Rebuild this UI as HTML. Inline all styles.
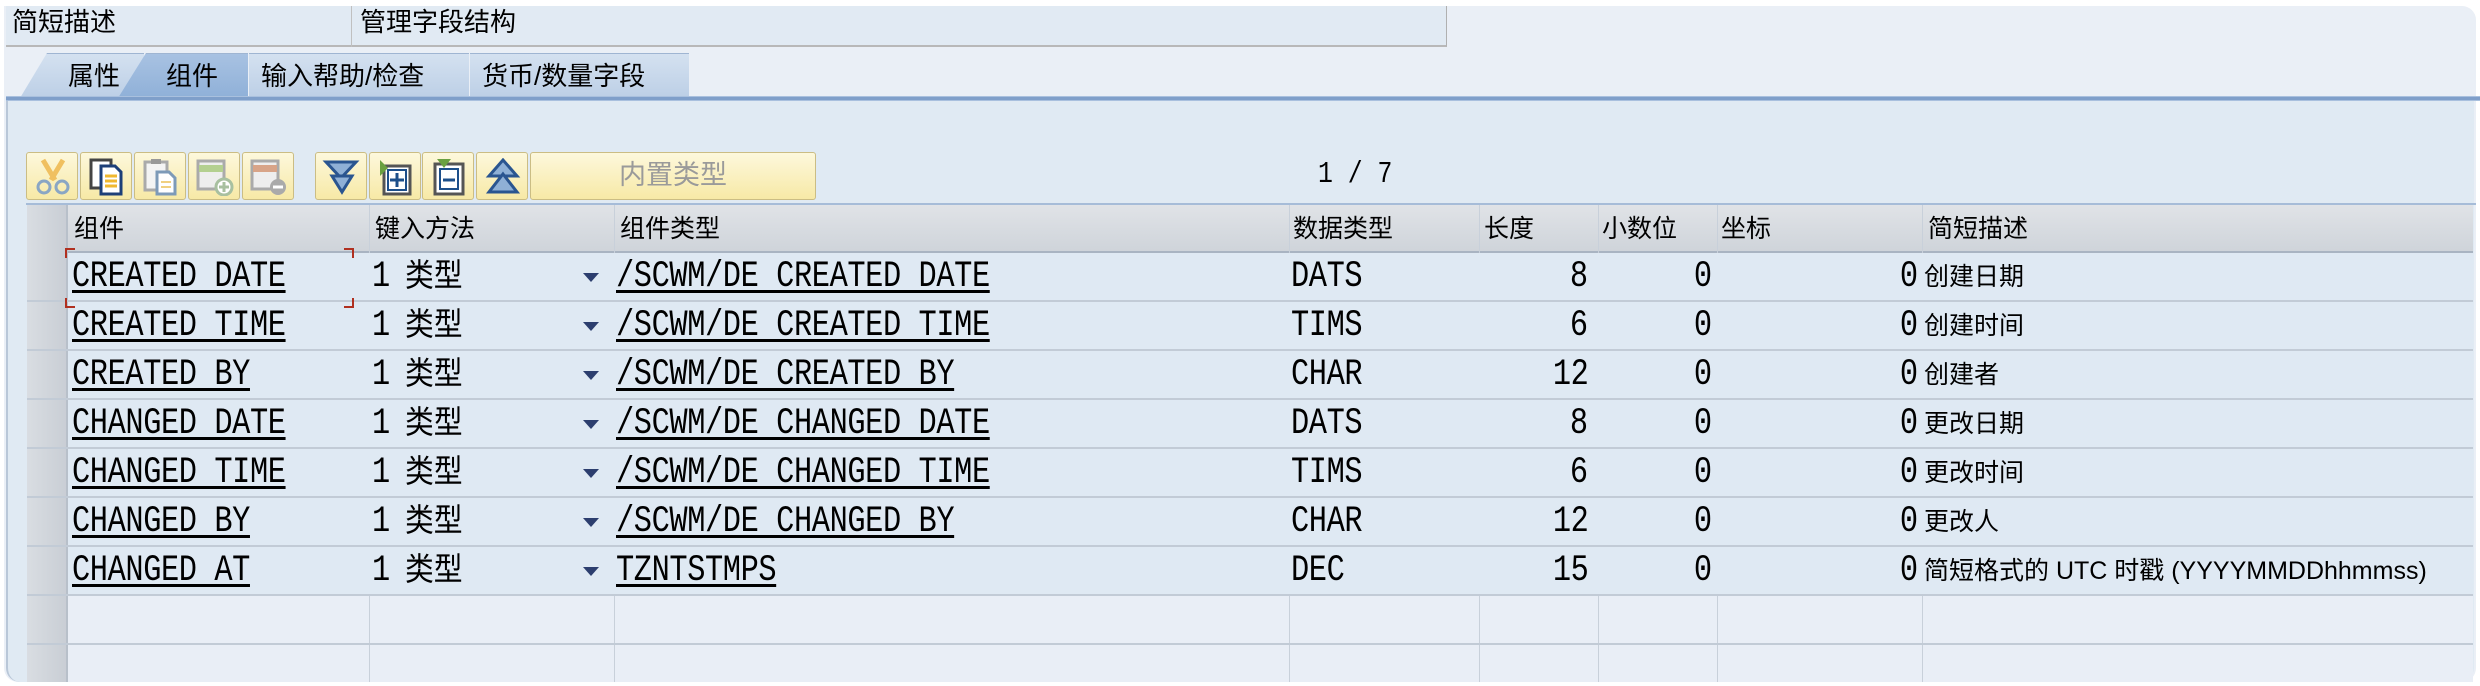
<!DOCTYPE html>
<html><head><meta charset="utf-8">
<style>
*{margin:0;padding:0;box-sizing:border-box}
body{width:2480px;height:686px;background:#fff;position:relative;overflow:hidden;font-family:"Liberation Sans","Noto Sans CJK SC",sans-serif;color:#000}
.a{position:absolute}
.panel{left:4px;top:6px;width:2472px;height:676px;background:#eaeff6;border-radius:0 14px 14px 14px}
.lower{left:6px;top:98px;width:2468px;height:584px;background:#e0eaf3;border-left:2px solid #b9c7d8;border-radius:0 0 14px 14px}
.bline{left:6px;top:96px;width:2474px;height:5px;background:#7f9fca;border-top:1px solid #a9c0de;border-bottom:1px solid #a9c0de}
.top{left:6px;top:6px;width:1441px;height:41px;background:#e1eaf3;border-right:1px solid #b0b0b0;border-bottom:2px solid #b8b8b8}
.lbl{font-size:26px;top:6px;line-height:32px}
.tab{top:53px;height:45px;font-size:26px;line-height:44px;background:linear-gradient(#d4e1f0,#bccfe6);border-top:1px solid #9fb5d2}
.tab.sel{background:linear-gradient(#a8c2e2,#8fb0d8)}
.btn{top:152px;height:48px;width:52px;background:linear-gradient(#fdf8dc,#f7e9a6);border:1px solid #cbbd84;border-radius:3px}
.btn svg{position:absolute;left:6px;top:5px}
.hd{top:205px;height:48px;background:linear-gradient(#e0e3e7,#cfd4da);border-bottom:2px solid #a9b4c2}
.t{position:absolute;top:0;font-family:"Liberation Mono",monospace;font-size:37px;letter-spacing:-0.5px;line-height:49px;white-space:pre;transform:scaleX(.82);transform-origin:left center}
.r{transform-origin:right center}
.u{text-decoration:underline;text-decoration-thickness:3px;text-underline-offset:4px}
.h{position:absolute;font-size:25px;line-height:48px;top:205px}
.cn{position:absolute;top:-4px;left:405px;font-family:"Noto Sans CJK SC",sans-serif;font-size:32px;line-height:49px;transform:scaleX(.9);transform-origin:left center}
.arr{position:absolute;top:20px;left:583px;width:0;height:0;border-left:8px solid transparent;border-right:8px solid transparent;border-top:9px solid #2c3e6e}
.d{position:absolute;top:0;left:1924px;font-family:"Liberation Sans","Noto Sans CJK SC",sans-serif;font-size:25px;line-height:49px;white-space:pre}
</style></head><body>
<div class="a panel"></div>
<div class="a top"></div>
<div class="a lbl" style="left:12px">简短描述</div>
<div class="a" style="left:351px;top:6px;width:1px;height:41px;background:#c0c0c0"></div>
<div class="a lbl" style="left:360px">管理字段结构</div>

<div class="a lower"></div>
<div class="a tab" style="left:20px;width:124px;clip-path:polygon(27px 0,100% 0,100% 100%,0 100%)"><span style="margin-left:48px">属性</span></div>
<div class="a tab" style="left:470px;width:219px;padding-left:12px">货币/数量字段</div>
<div class="a tab" style="left:249px;width:220px;padding-left:12px">输入帮助/检查</div>
<div class="a tab sel" style="left:118px;width:130px;clip-path:polygon(28px 0,100% 0,100% 100%,0 100%)"><span style="margin-left:48px">组件</span></div>
<div class="a bline"></div>

<div class="a btn" style="left:26px"><svg width="40" height="38" viewBox="0 0 40 38"><path d="M10 2 L22 22 M30 2 L18 22" stroke="#f0c060" stroke-width="5" fill="none"/><circle cx="11" cy="29" r="6" fill="none" stroke="#8aa6c4" stroke-width="3"/><circle cx="29" cy="29" r="6" fill="none" stroke="#8aa6c4" stroke-width="3"/></svg></div>
<div class="a btn" style="left:80px"><svg width="40" height="38" viewBox="0 0 40 38"><rect x="4" y="2" width="20" height="28" fill="#fff" stroke="#444" stroke-width="3"/><path d="M14 8 H28 L34 14 V36 H14 Z" fill="#fff" stroke="#1d3f78" stroke-width="3"/><path d="M18 18h12M18 23h12M18 28h12" stroke="#f0b830" stroke-width="3"/></svg></div>
<div class="a btn" style="left:134px"><svg width="40" height="38" viewBox="0 0 40 38"><rect x="4" y="4" width="22" height="28" fill="#f4f4f4" stroke="#aaa" stroke-width="3"/><rect x="10" y="1" width="10" height="5" fill="#999"/><path d="M16 14 H28 L34 20 V36 H16 Z" fill="#fff" stroke="#7d9ab8" stroke-width="3"/><path d="M20 24h10M20 29h10" stroke="#f0d080" stroke-width="2"/></svg></div>
<div class="a btn" style="left:188px"><svg width="40" height="38" viewBox="0 0 40 38"><rect x="3" y="3" width="26" height="28" fill="#eee" stroke="#aaa" stroke-width="3"/><rect x="4" y="7" width="24" height="7" fill="#b4d090"/><circle cx="29" cy="29" r="8" fill="#fff" stroke="#a8c0a0" stroke-width="3"/><path d="M29 24v10M24 29h10" stroke="#a8c0a0" stroke-width="3"/></svg></div>
<div class="a btn" style="left:242px"><svg width="40" height="38" viewBox="0 0 40 38"><rect x="3" y="3" width="26" height="28" fill="#eee" stroke="#aaa" stroke-width="3"/><rect x="4" y="7" width="24" height="7" fill="#d8a488"/><circle cx="29" cy="29" r="8" fill="#aaa"/><path d="M24 29h10" stroke="#fff" stroke-width="3"/></svg></div>
<div class="a btn" style="left:315px"><svg width="40" height="38" viewBox="0 0 40 38"><path d="M4 4 H34 L19 20 Z" fill="#8fb0d6" stroke="#2a5590" stroke-width="3"/><path d="M10 18 H30 L20 34 Z" fill="#8fb0d6" stroke="#2a5590" stroke-width="3"/></svg></div>
<div class="a btn" style="left:369px"><svg width="40" height="38" viewBox="0 0 40 38"><rect x="8" y="8" width="26" height="28" fill="#fff" stroke="#555" stroke-width="3"/><rect x="12" y="12" width="18" height="20" fill="#fff" stroke="#1d4f8a" stroke-width="2"/><path d="M21 15v14M14 22h14" stroke="#1d4f8a" stroke-width="3"/><path d="M4 2 L12 10 L4 18 Z" fill="#6aa040"/></svg></div>
<div class="a btn" style="left:422px"><svg width="40" height="38" viewBox="0 0 40 38"><rect x="6" y="6" width="28" height="30" fill="#fff" stroke="#555" stroke-width="3"/><rect x="11" y="11" width="18" height="20" fill="#fff" stroke="#1d4f8a" stroke-width="2"/><path d="M14 22h12" stroke="#1d4f8a" stroke-width="3"/><path d="M8 1 H22 L15 10 Z" fill="#6aa040"/></svg></div>
<div class="a btn" style="left:476px"><svg width="40" height="38" viewBox="0 0 40 38"><path d="M20 2 L34 18 H6 Z" fill="#8fb0d6" stroke="#2a5590" stroke-width="3"/><path d="M20 16 L34 34 H6 Z" fill="#8fb0d6" stroke="#2a5590" stroke-width="3"/></svg></div>
<div class="a btn" style="left:530px;width:286px;text-align:center;font-size:27px;line-height:44px;color:#9a9a9a">内置类型</div>
<div class="a" style="left:1318px;top:156px;font-size:31px;line-height:38px;font-family:'Liberation Mono',monospace;white-space:pre;transform:scaleX(.8);transform-origin:left">1 / 7</div>

<div class="a" style="left:26px;top:203px;width:2450px;height:2px;background:#a6bcd8"></div>
<div class="a" style="left:27px;top:205px;width:2446px;height:481px;background:#e9eef6"></div>
<div class="a hd" style="left:27px;width:2446px"></div>
<div class="a" style="left:27px;top:205px;width:39px;height:481px;background:linear-gradient(90deg,#d9dde2,#c9ced5)"></div>
<div class="h" style="left:74px">组件</div>
<div class="h" style="left:375px">键入方法</div>
<div class="h" style="left:620px">组件类型</div>
<div class="h" style="left:1293px">数据类型</div>
<div class="h" style="left:1484px">长度</div>
<div class="h" style="left:1602px">小数位</div>
<div class="h" style="left:1721px">坐标</div>
<div class="h" style="left:1928px">简短描述</div>

<div class="a" style="left:66px;top:205px;width:2px;height:481px;background:#b8c0ca"></div>
<div class="a" style="left:369px;top:205px;width:1px;height:481px;background:#c8d0da"></div>
<div class="a" style="left:614px;top:205px;width:1px;height:481px;background:#c8d0da"></div>
<div class="a" style="left:1289px;top:205px;width:1px;height:481px;background:#c8d0da"></div>
<div class="a" style="left:1479px;top:205px;width:1px;height:481px;background:#c8d0da"></div>
<div class="a" style="left:1598px;top:205px;width:1px;height:481px;background:#c8d0da"></div>
<div class="a" style="left:1717px;top:205px;width:1px;height:481px;background:#c8d0da"></div>
<div class="a" style="left:1922px;top:205px;width:1px;height:481px;background:#c8d0da"></div>

<div class="a" style="left:68px;top:253px;width:2405px;height:343px;background:#dfe9f3"></div>
<div class="a" style="left:27px;top:300px;width:2446px;height:2px;background:#c2cbd6"></div>
<div class="a" style="left:27px;top:349px;width:2446px;height:2px;background:#c2cbd6"></div>
<div class="a" style="left:27px;top:398px;width:2446px;height:2px;background:#c2cbd6"></div>
<div class="a" style="left:27px;top:447px;width:2446px;height:2px;background:#c2cbd6"></div>
<div class="a" style="left:27px;top:496px;width:2446px;height:2px;background:#c2cbd6"></div>
<div class="a" style="left:27px;top:545px;width:2446px;height:2px;background:#c2cbd6"></div>
<div class="a" style="left:27px;top:594px;width:2446px;height:2px;background:#c2cbd6"></div>
<div class="a" style="left:27px;top:643px;width:2446px;height:2px;background:#c2cbd6"></div>

<div class="a" style="left:65px;top:248px;width:10px;height:10px;border-left:2px solid #b03020;border-top:2px solid #b03020"></div>
<div class="a" style="left:65px;top:298px;width:10px;height:10px;border-left:2px solid #b03020;border-bottom:2px solid #b03020"></div>
<div class="a" style="left:344px;top:248px;width:10px;height:10px;border-right:2px solid #b03020;border-top:2px solid #b03020"></div>
<div class="a" style="left:344px;top:298px;width:10px;height:10px;border-right:2px solid #b03020;border-bottom:2px solid #b03020"></div>

<div class="a" style="left:0;top:253px;width:2480px">
 <div class="t u" style="left:72px">CREATED DATE</div>
 <div class="t" style="left:372px">1</div><div class="cn">类型</div><div class="arr"></div>
 <div class="t u" style="left:616px">/SCWM/DE CREATED DATE</div>
 <div class="t" style="left:1291px">DATS</div>
 <div class="t r" style="right:892px">8</div><div class="t r" style="right:768px">0</div><div class="t r" style="right:562px">0</div>
 <div class="d">创建日期</div>
</div>
<div class="a" style="left:0;top:302px;width:2480px">
 <div class="t u" style="left:72px">CREATED TIME</div>
 <div class="t" style="left:372px">1</div><div class="cn">类型</div><div class="arr"></div>
 <div class="t u" style="left:616px">/SCWM/DE CREATED TIME</div>
 <div class="t" style="left:1291px">TIMS</div>
 <div class="t r" style="right:892px">6</div><div class="t r" style="right:768px">0</div><div class="t r" style="right:562px">0</div>
 <div class="d">创建时间</div>
</div>
<div class="a" style="left:0;top:351px;width:2480px">
 <div class="t u" style="left:72px">CREATED BY</div>
 <div class="t" style="left:372px">1</div><div class="cn">类型</div><div class="arr"></div>
 <div class="t u" style="left:616px">/SCWM/DE CREATED BY</div>
 <div class="t" style="left:1291px">CHAR</div>
 <div class="t r" style="right:892px">12</div><div class="t r" style="right:768px">0</div><div class="t r" style="right:562px">0</div>
 <div class="d">创建者</div>
</div>
<div class="a" style="left:0;top:400px;width:2480px">
 <div class="t u" style="left:72px">CHANGED DATE</div>
 <div class="t" style="left:372px">1</div><div class="cn">类型</div><div class="arr"></div>
 <div class="t u" style="left:616px">/SCWM/DE CHANGED DATE</div>
 <div class="t" style="left:1291px">DATS</div>
 <div class="t r" style="right:892px">8</div><div class="t r" style="right:768px">0</div><div class="t r" style="right:562px">0</div>
 <div class="d">更改日期</div>
</div>
<div class="a" style="left:0;top:449px;width:2480px">
 <div class="t u" style="left:72px">CHANGED TIME</div>
 <div class="t" style="left:372px">1</div><div class="cn">类型</div><div class="arr"></div>
 <div class="t u" style="left:616px">/SCWM/DE CHANGED TIME</div>
 <div class="t" style="left:1291px">TIMS</div>
 <div class="t r" style="right:892px">6</div><div class="t r" style="right:768px">0</div><div class="t r" style="right:562px">0</div>
 <div class="d">更改时间</div>
</div>
<div class="a" style="left:0;top:498px;width:2480px">
 <div class="t u" style="left:72px">CHANGED BY</div>
 <div class="t" style="left:372px">1</div><div class="cn">类型</div><div class="arr"></div>
 <div class="t u" style="left:616px">/SCWM/DE CHANGED BY</div>
 <div class="t" style="left:1291px">CHAR</div>
 <div class="t r" style="right:892px">12</div><div class="t r" style="right:768px">0</div><div class="t r" style="right:562px">0</div>
 <div class="d">更改人</div>
</div>
<div class="a" style="left:0;top:547px;width:2480px">
 <div class="t u" style="left:72px">CHANGED AT</div>
 <div class="t" style="left:372px">1</div><div class="cn">类型</div><div class="arr"></div>
 <div class="t u" style="left:616px">TZNTSTMPS</div>
 <div class="t" style="left:1291px">DEC</div>
 <div class="t r" style="right:892px">15</div><div class="t r" style="right:768px">0</div><div class="t r" style="right:562px">0</div>
 <div class="d">简短格式的 UTC 时戳 (YYYYMMDDhhmmss)</div>
</div>

<div class="a" style="left:0;top:682px;width:2480px;height:4px;background:#fff"></div>
</body></html>
